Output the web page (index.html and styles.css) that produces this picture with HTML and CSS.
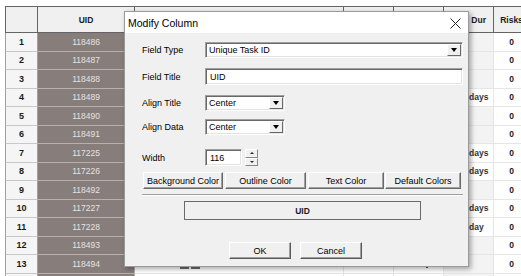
FILE: index.html
```html
<!DOCTYPE html>
<html lang="en">
<head>
  <meta charset="UTF-8" />
  <meta name="viewport" content="width=device-width,initial-scale=1.0" />
  <title>Modify Column</title>
  <link rel="stylesheet" href="styles.css">
</head>
<body>
  <div class="sheet">
    <div class="grid">
      <div class="hd"></div><div class="hd">UID</div><div class="hd">Name</div><div class="hd"></div><div class="hd"></div><div class="hd">Plan Dur</div><div class="hd">Risks</div>

      <div class="num">1</div><div class="uid">118486</div><div class="cell"></div><div class="cell"></div><div class="cell"></div><div class="dur"></div><div class="risk">0</div>
      <div class="num">2</div><div class="uid">118487</div><div class="cell"></div><div class="cell"></div><div class="cell"></div><div class="dur"></div><div class="risk">0</div>
      <div class="num">3</div><div class="uid">118488</div><div class="cell"></div><div class="cell"></div><div class="cell"></div><div class="dur"></div><div class="risk">0</div>
      <div class="num">4</div><div class="uid">118489</div><div class="cell"></div><div class="cell"></div><div class="cell"></div><div class="dur set">5 days</div><div class="risk">0</div>
      <div class="num">5</div><div class="uid">118490</div><div class="cell"></div><div class="cell"></div><div class="cell"></div><div class="dur"></div><div class="risk">0</div>
      <div class="num">6</div><div class="uid">118491</div><div class="cell"></div><div class="cell"></div><div class="cell"></div><div class="dur"></div><div class="risk">0</div>
      <div class="num">7</div><div class="uid">117225</div><div class="cell"></div><div class="cell"></div><div class="cell"></div><div class="dur set">5 days</div><div class="risk">0</div>
      <div class="num">8</div><div class="uid">117226</div><div class="cell"></div><div class="cell"></div><div class="cell"></div><div class="dur set">5 days</div><div class="risk">0</div>
      <div class="num">9</div><div class="uid">118492</div><div class="cell"></div><div class="cell"></div><div class="cell"></div><div class="dur"></div><div class="risk">0</div>
      <div class="num">10</div><div class="uid">117227</div><div class="cell"></div><div class="cell"></div><div class="cell"></div><div class="dur set">2 days</div><div class="risk">0</div>
      <div class="num">11</div><div class="uid">117228</div><div class="cell"></div><div class="cell"></div><div class="cell"></div><div class="dur set">1 day</div><div class="risk">0</div>
      <div class="num">12</div><div class="uid">118493</div><div class="cell"></div><div class="cell"></div><div class="cell"></div><div class="dur"></div><div class="risk">0</div>
      <div class="num">13</div><div class="uid">118494</div><div class="cell marks"><i></i><i></i></div><div class="cell"></div><div class="cell dot"><i></i></div><div class="dur"></div><div class="risk">0</div>
      <div class="num"></div><div class="uid"></div><div class="cell"></div><div class="cell"></div><div class="cell"></div><div class="dur"></div><div class="risk"></div>
    </div>

    <div class="dialog">
      <div class="titlebar">
        <span>Modify Column</span>
        <svg class="close" width="11" height="11" viewBox="0 0 11 11">
          <path d="M0.5 0.5 L10.5 10.5 M10.5 0.5 L0.5 10.5" stroke="#222" stroke-width="1" fill="none"/>
        </svg>
      </div>

      <div class="body">
        <div class="row r-type">
          <label>Field Type</label>
          <div class="combo wide"><span>Unique Task ID</span><b class="drop"></b></div>
        </div>
        <div class="row r-title">
          <label>Field Title</label>
          <div class="edit wide">UID</div>
        </div>
        <div class="row r-align">
          <label>Align Title</label>
          <div class="combo small"><span>Center</span><b class="drop"></b></div>
        </div>
        <div class="row r-data">
          <label>Align Data</label>
          <div class="combo small"><span>Center</span><b class="drop"></b></div>
        </div>
        <div class="row r-width">
          <label>Width</label>
          <div class="edit num-edit">116</div>
          <div class="spin"><b class="up"></b><b class="down"></b></div>
        </div>

        <div class="colors">
          <button class="btn c1">Background Color</button>
          <button class="btn c2">Outline Color</button>
          <button class="btn c3">Text Color</button>
          <button class="btn c4">Default Colors</button>
        </div>

        <div class="sep"></div>

        <div class="preview">UID</div>

        <div class="actions">
          <button class="btn act">OK</button>
          <button class="btn act">Cancel</button>
        </div>
      </div>
    </div>
  </div>
</body>
</html>
```

FILE: styles.css
```css
* { box-sizing: border-box; margin: 0; padding: 0; }
html, body {
  width: 100%;
  height: 100%;
  background: #fff;
  overflow: hidden;
  font-family: "Liberation Sans", Arial, sans-serif;
  color: #000;
}
.sheet { position: relative; width: 521px; height: 276px; overflow: hidden; }

/* background grid */
.grid {
  display: grid;
  grid-template-columns: 33px 97px 209px 50px 50px 50px 36px;
  grid-template-rows: 27px;
  grid-auto-rows: 18.5px;
  margin: 6px 0 0 5px;
  width: 525px;
  font-size: 8.5px;
}
.grid > div {
  display: flex; align-items: center; justify-content: center;
  border-right: 1px solid #e6e6e6;
  border-bottom: 1px solid #e6e6e6;
  white-space: nowrap; overflow: hidden;
}
.grid .hd {
  background: #f0f0f0;
  border-top: 1px solid #646464;
  border-right: 1px solid #646464;
  border-bottom: 1px solid #646464;
  font-weight: bold; font-size: 8.5px; color: #1a1a1a;
}
.grid .hd:first-child { border-left: 1px solid #646464; }
.grid .num {
  background: #f5f5f5;
  border-left: 1px solid #a0a0a0;
  border-right: 1px solid #a0a0a0;
  border-bottom: 1px solid #c8c8c8;
  font-weight: bold; font-size: 9px; color: #1a1a1a;
}
.grid .uid {
  background: #877d7a;
  color: #e6e2e1;
  border-bottom: 1px solid #b6b0ae;
  border-right: 1px solid #b6b0ae;
}
.grid .dur { background: #f3f3f3; justify-content: flex-start; padding-left: 18px; font-weight: bold; color: #333; }
.grid .dur.set { background: #fff; }
.grid .risk { font-weight: bold; color: #1a1a1a; }
.grid .marks { justify-content: flex-start; padding-left: 45px; gap: 2px; align-items: flex-end; padding-bottom: 4px; }
.grid .marks i { display: block; width: 9px; height: 9px; background: #6a6a6a; }
.grid .dot { justify-content: flex-start; padding-left: 32px; align-items: flex-end; padding-bottom: 5px; }
.grid .dot i { display: block; width: 2px; height: 3px; background: #555; }

/* dialog */
.dialog {
  position: absolute;
  left: 124px; top: 11px;
  width: 345px; height: 256px;
  background: #f0f0f0;
  border: 1px solid #9a9a9a;
  box-shadow: 2px 2px 5px rgba(0, 0, 0, 0.35);
  display: flex; flex-direction: column;
}
.titlebar {
  height: 21px; background: #fff;
  display: flex; align-items: center; justify-content: space-between;
  padding: 0 7px 0 3px;
  font-size: 10.5px; color: #000;
}
.close { margin-top: 1px; }
.body { padding: 9px 5px 0 17px; font-size: 9px; }
.row { display: flex; align-items: center; }
.row label { width: 63px; color: #000; }
.r-title { margin-top: 10px; }
.r-align { margin-top: 10px; }
.r-data { margin-top: 8px; }
.r-width { margin-top: 14px; }

.combo, .edit {
  height: 16px; background: #fff;
  border: 1px solid; border-color: #a0a0a0 #fff #fff #a0a0a0;
  box-shadow: inset 1px 1px 0 #696969, inset -1px -1px 0 #e3e3e3;
  display: flex; align-items: center;
  padding-left: 3px;
}
.edit { height: 17px; padding-left: 4px; }
.wide { width: 258px; }
.small { width: 80px; }
.num-edit { width: 37px; }
.combo span { flex: 1; }
.drop {
  width: 14px; height: 12px; margin-right: 1px;
  background: #f0f0f0;
  border: 1px solid; border-color: #fff #696969 #696969 #fff;
  display: flex; align-items: center; justify-content: center;
}
.drop::after {
  content: ""; border-left: 3.5px solid transparent; border-right: 3.5px solid transparent;
  border-top: 4px solid #000;
}
.spin { margin-left: 3px; width: 13px; height: 17px; display: flex; flex-direction: column; }
.spin b {
  flex: 1; background: #f0f0f0;
  border: 1px solid; border-color: #fff #888 #888 #fff;
  display: flex; align-items: center; justify-content: center;
}
.spin .up::after { content: ""; border-left: 2px solid transparent; border-right: 2px solid transparent; border-bottom: 2px solid #222; }
.spin .down::after { content: ""; border-left: 2px solid transparent; border-right: 2px solid transparent; border-top: 2px solid #222; }

.btn {
  height: 17px;
  font-family: inherit; font-size: 9px; color: #000;
  background: #f0f0f0;
  border: 1px solid; border-color: #fff #696969 #696969 #fff;
  box-shadow: inset -1px -1px 0 #a0a0a0;
  padding: 0;
}
.colors { display: flex; gap: 1px; margin: 6px 0 0 1px; }
.c1 { width: 80px; }
.c2 { width: 81px; margin-left: 1px; }
.c3 { width: 76px; margin-left: 1px; }
.c4 { width: 76px; }

.sep { margin-top: 5px; width: 321px; border-top: 1px solid #a0a0a0; border-bottom: 1px solid #fff; }
.preview {
  margin: 5px 0 0 42px; width: 237px; height: 19px;
  border: 1px solid #6a6a6a;
  display: flex; align-items: center; justify-content: center;
  font-weight: bold; font-size: 8.5px; color: #1a1a1a;
}
.actions { display: flex; gap: 9px; margin: 22px 0 0 87px; }
.act { width: 62px; height: 17px; border-color: #fff #5a5a5a #5a5a5a #fff; }
```
